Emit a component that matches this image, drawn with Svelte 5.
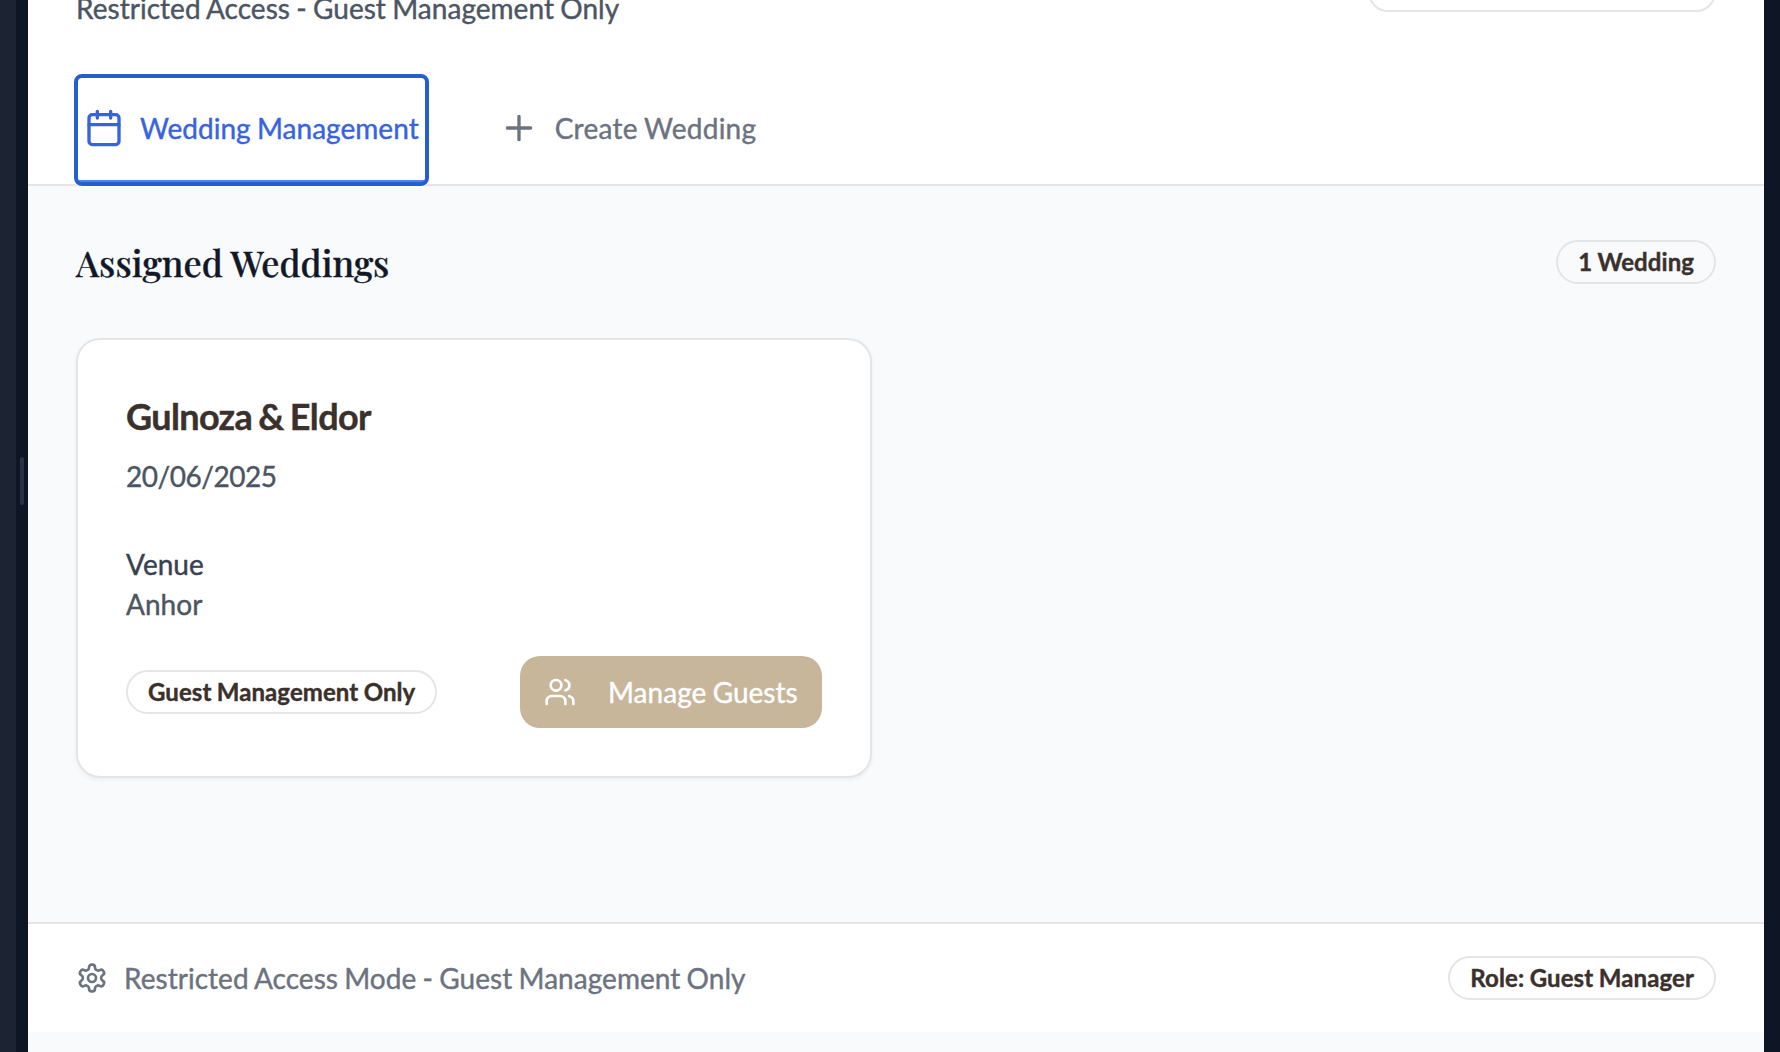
<script>
  const tabs = [
    { label: 'Wedding Management', icon: 'calendar', active: true },
    { label: 'Create Wedding', icon: 'plus', active: false }
  ];
  const wedding = { couple: 'Gulnoza & Eldor', date: '20/06/2025', venue: 'Anhor' };
</script>

{#snippet icon(name, cls)}
  <svg class={cls} viewBox="0 0 24 24" aria-hidden="true">
    {#if name === 'calendar'}
      <path d="M8 2v4M16 2v4M3 10h18" />
      <rect x="3" y="4" width="18" height="18" rx="2" />
    {:else if name === 'plus'}
      <path d="M5 12h14M12 5v14" />
    {:else if name === 'users'}
      <path d="M16 21v-2a4 4 0 0 0-4-4H6a4 4 0 0 0-4 4v2" />
      <circle cx="9" cy="7" r="4" />
      <path d="M22 21v-2a4 4 0 0 0-3-3.87M16 3.13a4 4 0 0 1 0 7.75" />
    {:else}
      <path d="M12.22 2h-.44a2 2 0 0 0-2 2v.18a2 2 0 0 1-1 1.73l-.43.25a2 2 0 0 1-2 0l-.15-.08a2 2 0 0 0-2.73.73l-.22.38a2 2 0 0 0 .73 2.73l.15.1a2 2 0 0 1 1 1.72v.51a2 2 0 0 1-1 1.74l-.15.09a2 2 0 0 0-.73 2.73l.22.38a2 2 0 0 0 2.73.73l.15-.08a2 2 0 0 1 2 0l.43.25a2 2 0 0 1 1 1.73V20a2 2 0 0 0 2 2h.44a2 2 0 0 0 2-2v-.18a2 2 0 0 1 1-1.73l.43-.25a2 2 0 0 1 2 0l.15.08a2 2 0 0 0 2.73-.73l.22-.39a2 2 0 0 0-.73-2.73l-.15-.08a2 2 0 0 1-1-1.74v-.5a2 2 0 0 1 1-1.74l.15-.09a2 2 0 0 0 .73-2.73l-.22-.38a2 2 0 0 0-2.73-.73l-.15.08a2 2 0 0 1-2 0l-.43-.25a2 2 0 0 1-1-1.73V4a2 2 0 0 0-2-2z" />
      <circle cx="12" cy="12" r="3" />
    {/if}
  </svg>
{/snippet}

<div class="frame">
  <aside class="rail"></aside>
  <div class="gutter"><span class="handle"></span></div>
  <div class="page">
    <header class="header">
      <p class="subtitle">Restricted Access - Guest Management Only</p>
      <button class="header-button" aria-label="Account"></button>
    </header>

    <nav class="tabs">
      {#each tabs as tab}
        <button class="tab" class:active={tab.active}>
          {@render icon(tab.icon, 'icon-lg')}
          <span>{tab.label}</span>
        </button>
      {/each}
    </nav>

    <main class="content">
      <div class="section-head">
        <h2>Assigned Weddings</h2>
        <span class="badge">1 Wedding</span>
      </div>
      <article class="card">
        <h3>{wedding.couple}</h3>
        <p class="date">{wedding.date}</p>
        <p class="venue-label">Venue</p>
        <p class="venue">{wedding.venue}</p>
        <div class="card-actions">
          <span class="badge">Guest Management Only</span>
          <button class="manage">
            {@render icon('users', 'icon-md')}
            <span>Manage Guests</span>
          </button>
        </div>
      </article>
    </main>

    <footer class="footer">
      <div class="mode">
        {@render icon('settings', 'icon-md')}
        <span>Restricted Access Mode - Guest Management Only</span>
      </div>
      <span class="badge role">Role: Guest Manager</span>
    </footer>
  </div>
</div>

<style>
  :global(body) {
    background: #0e1525;
    overflow: hidden;
  }
  * {
    box-sizing: border-box;
  }
  .frame {
    display: flex;
    height: 1052px;
    padding-right: 16px;
    overflow: hidden;
    background: #0e1525;
    font: 400 28px/40px Lato, sans-serif;
    letter-spacing: 0.03px;
    word-spacing: -0.9px;
    -webkit-text-stroke: 0.4px currentColor;
  }
  .rail {
    width: 16px;
    background: #1c2333;
  }
  .gutter {
    width: 12px;
    padding: 457px 4px 0;
  }
  .handle {
    display: block;
    height: 48px;
    border-radius: 2px;
    background: #2b3245;
  }
  .page {
    flex: 1;
    background: #f9fafc;
  }
  h2,
  h3,
  p {
    margin: 0;
  }
  button {
    font: inherit;
    letter-spacing: inherit;
    word-spacing: inherit;
    border: 0;
    background: none;
  }
  svg {
    flex: none;
    fill: none;
    stroke: currentColor;
    stroke-width: 2;
    stroke-linecap: round;
    stroke-linejoin: round;
  }
  .icon-lg {
    width: 40px;
    height: 40px;
  }
  .icon-md {
    width: 32px;
    height: 32px;
  }
  .header {
    display: flex;
    justify-content: space-between;
    align-items: flex-start;
    height: 88px;
    margin-top: -60px;
    padding: 0 48px;
    background: #fff;
  }
  .subtitle {
    padding-top: 48px;
    color: #4b5563;
  }
  .header-button {
    width: 348px;
    height: 72px;
    border: 2px solid #e5e5e5;
    border-radius: 20px;
  }
  .tabs {
    display: flex;
    gap: 64px;
    height: 158px;
    padding: 48px 48px 0;
    border-bottom: 2px solid #e5e5e5;
    background: #fff;
  }
  .tab {
    display: flex;
    align-items: center;
    gap: 16px;
    height: 108px;
    padding: 0 8px;
    border-bottom: 4px solid transparent;
    color: #6b7280;
    letter-spacing: 0.27px;
    white-space: nowrap;
  }
  .tab.active {
    border-bottom-color: #4f83f1;
    border-radius: 6px;
    outline: 4px solid #265fcb;
    outline-offset: -2px;
    box-shadow: 0 0 0 3px #fff;
    color: #3662e3;
    letter-spacing: 0.03px;
  }
  .content {
    height: 736px;
    padding: 48px 48px 0;
  }
  .section-head {
    display: flex;
    justify-content: space-between;
    align-items: center;
    height: 56px;
    margin-bottom: 48px;
  }
  h2 {
    color: #111827;
    font: 500 36px/56px 'Playfair Display', 'Liberation Serif', serif;
    letter-spacing: 0.01px;
    word-spacing: 0;
  }
  .badge {
    padding: 4px 20px;
    border: 2px solid #e5e5e5;
    border-radius: 22px;
    color: #3a302c;
    font-size: 24px;
    font-weight: 700;
    line-height: 32px;
    letter-spacing: 0.07px;
    word-spacing: -0.5px;
    white-space: nowrap;
  }
  .badge.role {
    letter-spacing: 0.11px;
  }
  .card {
    width: 796px;
    height: 440px;
    padding: 48px;
    border: 2px solid #e5e5e5;
    border-radius: 24px;
    background: #fff;
    box-shadow: 0 2px 4px rgba(0, 0, 0, 0.05);
  }
  h3 {
    color: #3a302c;
    font-size: 36px;
    font-weight: 700;
    line-height: 56px;
    letter-spacing: -0.63px;
    word-spacing: -2px;
  }
  .date {
    padding-top: 12px;
    color: #4b5563;
    letter-spacing: -0.48px;
  }
  .venue-label {
    padding-top: 48px;
    color: #374151;
  }
  .venue {
    color: #4b5563;
  }
  .card-actions {
    display: flex;
    justify-content: space-between;
    align-items: center;
    margin-top: 32px;
  }
  .manage {
    display: flex;
    align-items: center;
    gap: 32px;
    width: 302px;
    height: 72px;
    padding: 0 24px;
    border-radius: 20px;
    background: #c8b69b;
    color: #fff;
    white-space: nowrap;
  }
  .footer {
    display: flex;
    justify-content: space-between;
    align-items: center;
    height: 110px;
    padding: 0 48px;
    border-top: 2px solid #e5e5e5;
    background: #fff;
    color: #6b7280;
  }
  .mode {
    display: flex;
    align-items: center;
    gap: 16px;
  }
</style>
